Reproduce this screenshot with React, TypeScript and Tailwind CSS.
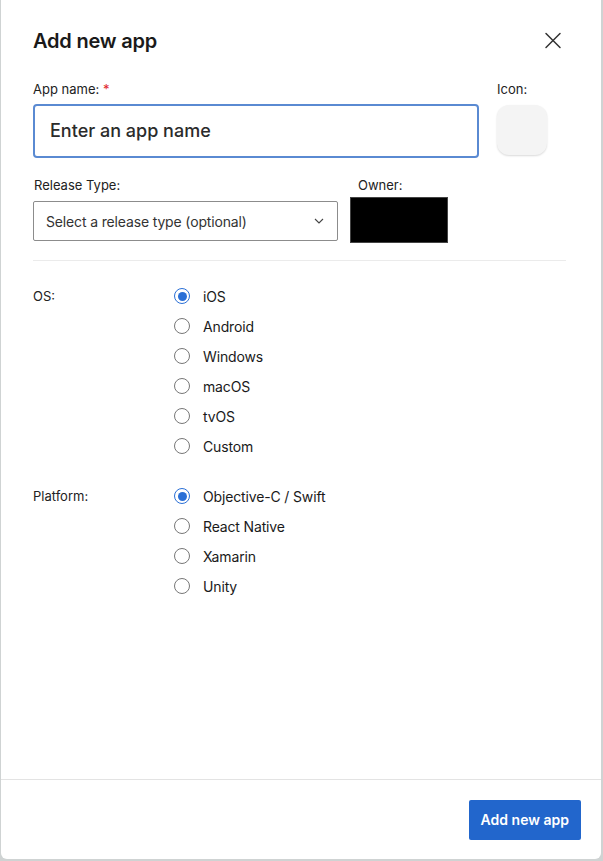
import { useState } from "react";

const osOptions = ["iOS", "Android", "Windows", "macOS", "tvOS", "Custom"];
const platformOptions = ["Objective-C / Swift", "React Native", "Xamarin", "Unity"];

type RadioGroupProps = {
  label: string
  options: string[]
  value: string
  setValue: (value: string) => void
}

function RadioGroup({ label, options, value, setValue }: RadioGroupProps) {
  return (
    <div className="flex">
      <div className="w-[141px] text-[13px] leading-[30px] text-[#222]">{label}</div>
      <div className="flex flex-col">
        {options.map((option) => (
          <label key={option} className="flex h-[30px] cursor-pointer items-center gap-[13px]" onClick={() => setValue(option)}>
            {value === option ? (
              <span className="flex h-[16px] w-[16px] items-center justify-center rounded-full border-[1.5px] border-[#2a6fd6] bg-white">
                <span className="h-[9px] w-[9px] rounded-full bg-[#2a6fd6]" />
              </span>
            ) : (
              <span className="h-[16px] w-[16px] rounded-full border border-[#777] bg-white" />
            )}
            <span className="text-[14px] tracking-[-0.15px] text-[#1a1a1a]">{option}</span>
          </label>
        ))}
      </div>
    </div>
  );
}

export default function App() {
  const [os, setOs] = useState("iOS");
  const [platform, setPlatform] = useState("Objective-C / Swift");

  return (
    <div className="h-[861px] w-[603px] bg-[#cfd3d3] font-['Inter',sans-serif]">
      <div className="ml-px flex h-[859px] w-[600px] flex-col rounded-b-md bg-white">
        <div className="flex-1 px-[32px] pt-[26px]">
          <div className="flex items-center justify-between">
            <h1 className="text-[20px] font-semibold tracking-[-0.2px] text-[#1a1a1a]">Add new app</h1>
            <button type="button" className="mr-[7px] text-[#333]">
              <svg width="18" height="18" viewBox="0 0 18 18" fill="none" stroke="currentColor" strokeWidth="1.5" strokeLinecap="round">
                <path d="M2 1.5L16 15.5M16 1.5L2 15.5" />
              </svg>
            </button>
          </div>

          <div className="mt-[24px] flex gap-[18px]">
            <div className="w-[446px]">
              <label htmlFor="appName" className="block text-[13px] text-[#222]">
                App name: <span className="text-[#e0252b]">*</span>
              </label>
              <input
                id="appName"
                type="text"
                placeholder="Enter an app name"
                className="mt-[4px] block h-[54px] w-full rounded-[4px] border-2 border-[#5a8ad2] px-[15px] text-[18px] font-medium text-[#222] outline-none placeholder:text-[#2b2b2b]"
              />
            </div>
            <div>
              <div className="text-[13px] text-[#222]">Icon:</div>
              <div className="mt-[5px] h-[50px] w-[50px] rounded-[12px] bg-[#f4f4f4] shadow-[0_1px_2px_rgba(0,0,0,0.15)]" />
            </div>
          </div>

          <div className="mt-[18px] flex gap-[12px]">
            <div>
              <div className="ml-px text-[13px] text-[#222]">Release Type:</div>
              <button type="button" className="mt-[6px] flex h-[40px] w-[305px] items-center justify-between rounded-[2px] border border-[#8c8c8c] pl-[12px] pr-[12px] text-[14px] tracking-[-0.15px] text-[#333]">
                <span>Select a release type (optional)</span>
                <svg width="12" height="12" viewBox="0 0 12 12" fill="none" stroke="#444" strokeWidth="1.1">
                  <path d="M2 4L6 8L10 4" />
                </svg>
              </button>
            </div>
            <div>
              <div className="ml-[8px] text-[13px] text-[#222]">Owner:</div>
              <div className="mt-[2px] h-[46px] w-[98px] border border-[#444] bg-black" />
            </div>
          </div>

          <div className="mt-[17px] mr-[3px] border-t border-[#ebebeb]" />

          <div className="mt-[20px] flex flex-col gap-[20px]">
            <RadioGroup label="OS:" options={osOptions} value={os} setValue={setOs} />
            <RadioGroup label="Platform:" options={platformOptions} value={platform} setValue={setPlatform} />
          </div>
        </div>

        <div className="flex h-[80px] items-center justify-end border-t border-[#e3e3e3] pr-[20px]">
          <button type="submit" className="h-[40px] rounded-[2px] bg-[#2266cc] px-[12px] text-[14px] font-semibold text-white">
            Add new app
          </button>
        </div>
      </div>
    </div>
  );
}
